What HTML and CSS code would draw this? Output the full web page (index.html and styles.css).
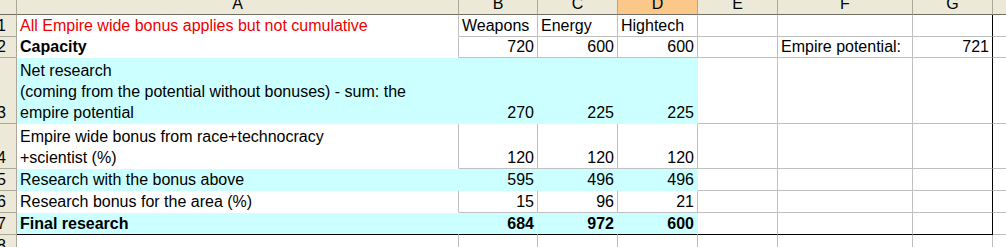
FILE: index.html
```html
<!DOCTYPE html>
<html>
<head>
<meta charset="utf-8">
<link rel="stylesheet" href="styles.css">
</head>
<body>
<div class="sheet">
  <div class="corner"></div>
  <div class="ch">A</div>
  <div class="ch">B</div>
  <div class="ch">C</div>
  <div class="ch sel">D</div>
  <div class="ch">E</div>
  <div class="ch">F</div>
  <div class="ch">G</div>
  <div class="ch">H</div>

  <div class="rh">1</div>
  <div class="c a red">All Empire wide bonus applies but not cumulative</div>
  <div class="c">Weapons</div>
  <div class="c">Energy</div>
  <div class="c">Hightech</div>
  <div class="c"></div>
  <div class="c"></div>
  <div class="c br"></div>
  <div class="c"></div>

  <div class="rh">2</div>
  <div class="c a b">Capacity</div>
  <div class="c num">720</div>
  <div class="c num">600</div>
  <div class="c num">600</div>
  <div class="c"></div>
  <div class="c">Empire potential:</div>
  <div class="c num br">721</div>
  <div class="c"></div>

  <div class="rh">3</div>
  <div class="c a cy">Net research<br>(coming from the potential without bonuses) - sum: the<br>empire potential</div>
  <div class="c cy num">270</div>
  <div class="c cy num">225</div>
  <div class="c cy num">225</div>
  <div class="c"></div>
  <div class="c"></div>
  <div class="c br"></div>
  <div class="c"></div>

  <div class="rh">4</div>
  <div class="c a">Empire wide bonus from race+technocracy<br>+scientist (%)</div>
  <div class="c num">120</div>
  <div class="c num">120</div>
  <div class="c num">120</div>
  <div class="c"></div>
  <div class="c"></div>
  <div class="c br"></div>
  <div class="c"></div>

  <div class="rh">5</div>
  <div class="c a cy">Research with the bonus above</div>
  <div class="c cy num">595</div>
  <div class="c cy num">496</div>
  <div class="c cy num">496</div>
  <div class="c"></div>
  <div class="c"></div>
  <div class="c br"></div>
  <div class="c"></div>

  <div class="rh">6</div>
  <div class="c a">Research bonus for the area (%)</div>
  <div class="c num">15</div>
  <div class="c num">96</div>
  <div class="c num">21</div>
  <div class="c"></div>
  <div class="c"></div>
  <div class="c br"></div>
  <div class="c"></div>

  <div class="rh">7</div>
  <div class="c a cy b bb">Final research</div>
  <div class="c cy num b bb">684</div>
  <div class="c cy num b bb">972</div>
  <div class="c cy num b bb">600</div>
  <div class="c bb"></div>
  <div class="c bb"></div>
  <div class="c br bb"></div>
  <div class="c"></div>

  <div class="rh">8</div>
  <div class="c"></div>
  <div class="c"></div>
  <div class="c"></div>
  <div class="c"></div>
  <div class="c"></div>
  <div class="c"></div>
  <div class="c"></div>
  <div class="c"></div>
</div>
</body>
</html>
```

FILE: styles.css
```css
html, body {
  margin: 0;
  padding: 0;
  background: #ffffff;
  overflow: hidden;
}

.sheet {
  display: grid;
  grid-template-columns: 30px 442px 79px 80px 80px 80px 135px 80px 80px;
  grid-template-rows: 19px 22px 21px 66px 45px 22px 22px 22px 22px;
  margin: -4px 0 0 -13px;
  font-family: "Liberation Sans", Arial, sans-serif;
  font-size: 16px;
  line-height: 21px;
  color: #000;
}

.sheet > div {
  box-sizing: border-box;
  display: flex;
  align-items: flex-end;
  white-space: nowrap;
  min-width: 0;
}

.corner,
.ch,
.rh {
  background: #ece9d8;
  border-right: 1px solid #aca899;
  border-bottom: 1px solid #aca899;
  justify-content: center;
}

.ch {
  border-bottom-color: #716f64;
}

.corner {
  border-bottom-color: #716f64;
}

.ch.sel {
  background: #fbc889;
}

.c {
  border-right: 1px solid #c0c0c0;
  border-bottom: 1px solid #c0c0c0;
  padding: 0 3px;
}

.a {
  border-bottom-color: #ffffff;
}

.cy {
  background: #ccffff;
  border-color: #ccffff;
}

.num {
  justify-content: flex-end;
}

.b {
  font-weight: bold;
}

.red {
  color: #ee0000;
}

.br {
  border-right-color: #000;
}

.bb {
  border-bottom-color: #000;
}
```
